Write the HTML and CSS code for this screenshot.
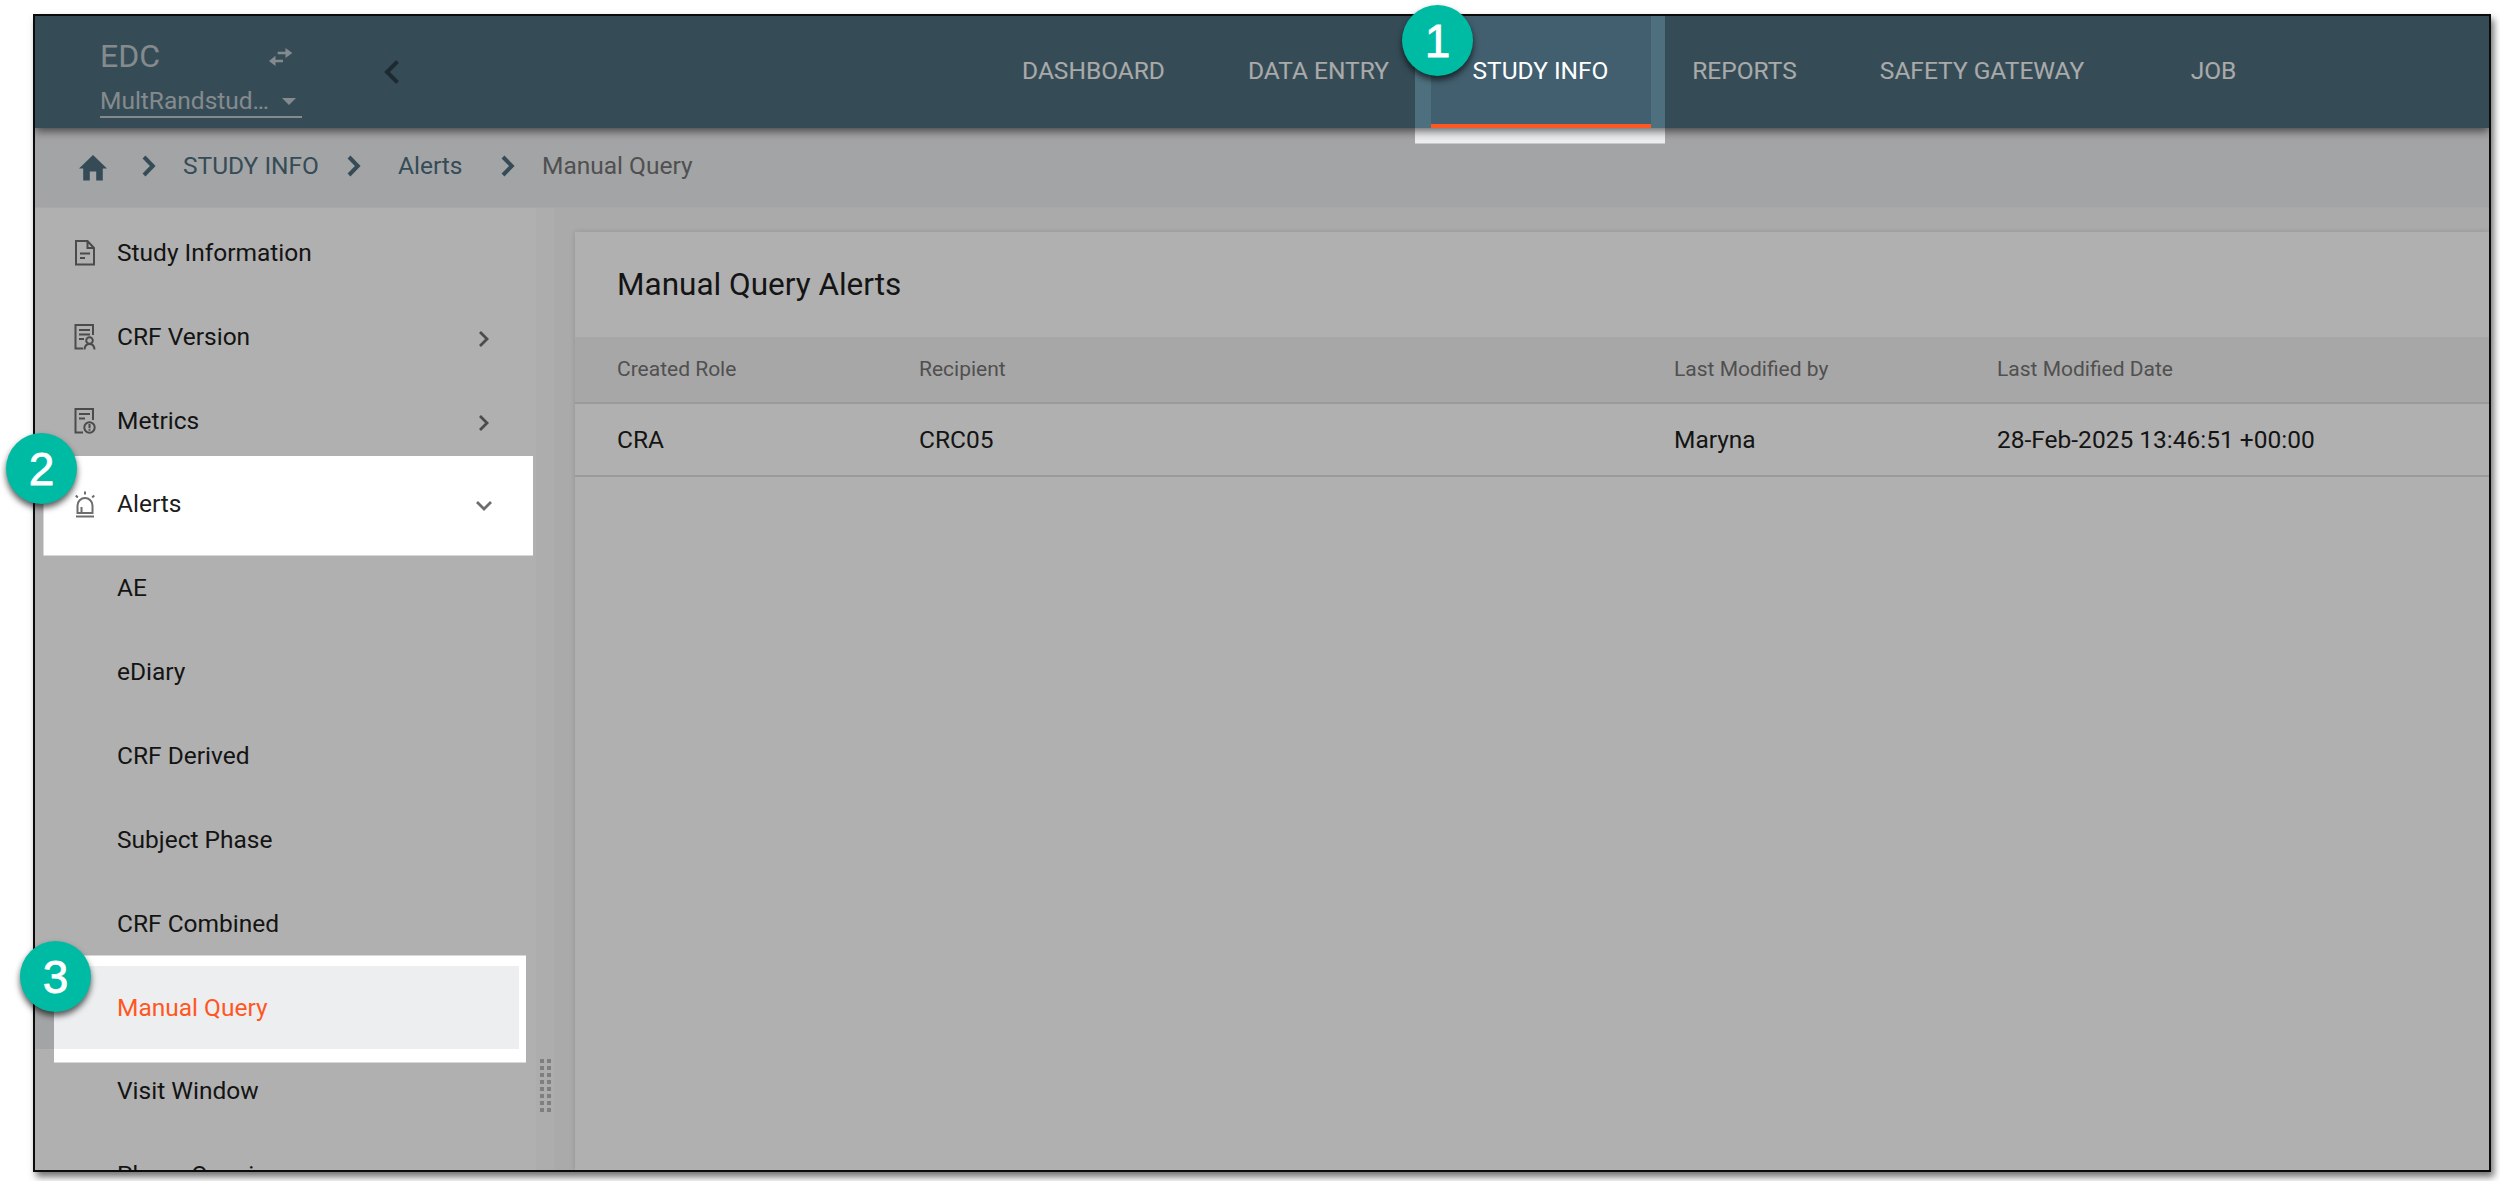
FILE: index.html
```html
<!DOCTYPE html>
<html lang="en">
<head>
<meta charset="utf-8">
<title>EDC - Manual Query Alerts</title>
<link rel="stylesheet" href="styles.css">
</head>
<body>
<div class="window">
  <header class="topbar">
    <div class="study">
      <div class="study-head"><span class="product">EDC</span>
        <svg class="swap" width="24" height="18" viewBox="0 0 24 18"><path d="M16.500 0v3.800H8.700v2.500h7.800V10L23.300 5zM6.500 7.800 0 12.900l6.500 5.100v-3.800H14v-2.500H6.500z"/></svg>
      </div>
      <div class="study-select"><span class="study-name">MultRandstud…</span><i class="caret"></i></div>
    </div>
    <svg class="collapse" width="16" height="26" viewBox="0 0 16 26"><path d="M13.500 2.500 3 13l10.500 10.500"/></svg>
    <nav class="tabs">
      <a class="tab t-dashboard">DASHBOARD</a>
      <a class="tab t-entry">DATA ENTRY</a>
      <a class="tab t-info active">STUDY INFO</a>
      <a class="tab t-reports">REPORTS</a>
      <a class="tab t-safety">SAFETY GATEWAY</a>
      <a class="tab t-job">JOB</a>
    </nav>
  </header>
  <div class="crumbs">
    <svg class="home" width="28" height="26" viewBox="0 0 28 26"><path d="M14 0 0 13.500h4.200V25.500h6.600V16.500h6.400v9h6.600V13.500H28z"/></svg>
    <svg class="sep s1" width="14" height="22" viewBox="0 0 14 22"><path d="m2 2 8.800 9L2 20"/></svg>
    <a class="crumb c1">STUDY INFO</a>
    <svg class="sep s2" width="14" height="22" viewBox="0 0 14 22"><path d="m2 2 8.800 9L2 20"/></svg>
    <a class="crumb c2">Alerts</a>
    <svg class="sep s3" width="14" height="22" viewBox="0 0 14 22"><path d="m2 2 8.800 9L2 20"/></svg>
    <span class="crumb here">Manual Query</span>
  </div>
  <div class="body">
    <aside class="side">
      <div class="item"><svg class="icon" width="22" height="28" viewBox="0 0 22 28"><path d="M2 2h11.500L20 9v16.500H2zM13.500 2v7H20M6 14.500h10M6 19h5"/></svg><span>Study Information</span></div>
      <div class="item"><svg class="icon" width="22" height="28" viewBox="0 0 22 28"><path d="M9 25.500H1.500V2H19v10M5 7h11M5 11.500h11M5 16h5M10.500 26.500c.3-4 2-5.500 5-5.500s4.700 1.500 5 5.500"/><circle cx="15.500" cy="17.500" r="3.300"/></svg><span>CRF Version</span><svg class="arrow" width="12" height="18" viewBox="0 0 12 18"><path d="m2 2 7 7-7 7"/></svg></div>
      <div class="item"><svg class="icon" width="22" height="28" viewBox="0 0 22 28"><path d="M9 25.500H1.500V2H19v11M5 7h11M5 11.500h6M15.500 17v4.200M15.500 22.300v1.500"/><circle cx="15.500" cy="20.500" r="5.200"/></svg><span>Metrics</span><svg class="arrow" width="12" height="18" viewBox="0 0 12 18"><path d="m2 2 7 7-7 7"/></svg></div>
      <div class="item"><svg class="icon" width="22" height="28" viewBox="0 0 22 28"><path d="M3.500 22v-7.500a7.500 7.500 0 0 1 15 0V22zM2 25.500h18M11 .5v3M1.800 4.500l2 2M20.200 4.500l-2 2M7.500 21v-5"/></svg><span>Alerts</span><svg class="arrow down" width="18" height="12" viewBox="0 0 18 12"><path d="m2 2 7 7 7-7"/></svg></div>
      <div class="item sub">AE</div>
      <div class="item sub">eDiary</div>
      <div class="item sub">CRF Derived</div>
      <div class="item sub">Subject Phase</div>
      <div class="item sub">CRF Combined</div>
      <div class="item sub current">Manual Query</div>
      <div class="item sub">Visit Window</div>
      <div class="item sub">Phase Opening</div>
    </aside>
    <div class="resizer"><div class="grip"></div></div>
    <main class="content">
      <section class="card">
        <h1>Manual Query Alerts</h1>
        <div class="row head"><div>Created Role</div><div>Recipient</div><div>Last Modified by</div><div>Last Modified Date</div></div>
        <div class="row"><div>CRA</div><div>CRC05</div><div>Maryna</div><div>28-Feb-2025 13:46:51 +00:00</div></div>
      </section>
    </main>
  </div>
</div>
<svg class="dim" width="2500" height="1181" viewBox="0 0 2500 1181"><path fill-rule="evenodd" d="M35 16H2489V1170H35zM1415 16H1665V143.500H1415zM43.500 456H533V555.500H43.500zM54 955.500H526V1062.500H54z"/></svg>
<div class="badge b1">1</div>
<div class="badge b2">2</div>
<div class="badge b3">3</div>
</body>
</html>
```
FILE: styles.css
```css
* { box-sizing: border-box; }
body { margin: 0; width: 2500px; height: 1181px; overflow: hidden; background: #fff; font-family: Roboto, sans-serif; font-size: 24.5px; padding: 14px 0 0 33px; position: relative; }
.window { width: 2458px; height: 1158px; border: 2px solid #0b0b0b; box-shadow: 3px 5px 7px rgba(0,0,0,.55); display: flex; flex-direction: column; overflow: hidden; background: #fff; }
.topbar { height: 112px; flex: none; display: flex; background: #4e6f7e; box-shadow: 0 3px 9px rgba(0,0,0,.6); position: relative; z-index: 2; }
.study { width: 202px; margin-left: 65px; color: #c0c9cd; }
.study-head { display: flex; justify-content: space-between; height: 62px; padding: 22px 9px 0 0; }
.product { font-size: 32px; line-height: 37px; }
.swap { margin-top: 10px; fill: #c0c9cd; }
.study-select { height: 40px; border-bottom: 2px solid #c0c9cd; display: flex; justify-content: space-between; padding: 8px 6px 0 0; }
.study-name { line-height: 30px; height: 30px; }
.caret { width: 0; height: 0; margin-top: 12px; border: 7px solid transparent; border-top-color: #c0c9cd; border-bottom: 0; }
.collapse { margin: 43px 0 0 82px; fill: none; stroke: #2c3e47; stroke-width: 4; }
.tabs { margin-left: 581px; display: flex; }
.tab { display: flex; align-items: center; justify-content: center; color: #f6f6f6; padding-bottom: 3px; white-space: nowrap; }
.t-dashboard { width: 225px; }
.t-entry { width: 225px; }
.t-info { width: 220px; }
.t-reports { width: 187px; }
.t-safety { width: 288px; }
.t-job { width: 175px; }
.tab.active { background: #425f6f; border-bottom: 4px solid #ff5722; color: #fff; padding: 1px 1px 0 0; }
.crumbs { height: 80px; flex: none; background: #edeef0; display: flex; align-items: center; padding: 0 0 3px 44px; color: #4e6f7e; border-bottom: 1px solid #f3f3f3; }
.crumb { padding-bottom: 2px; }
.home { fill: #4e6f7e; margin-top: 3px; }
.sep { fill: none; stroke: #4e6f7e; stroke-width: 4; }
.s1 { margin-left: 35px; margin-right: 27px; }
.s2 { margin-right: 37px; }
.s3 { margin-right: 27px; }
.c1 { width: 164px; }
.c2 { width: 103px; }
.here { color: #747474; }
.body { flex: 1; display: flex; min-height: 0; }
.side { width: 501px; flex: none; padding: 3px 17px 0 0; color: #1d1d1d; overflow: hidden; }
.item { height: 83.850px; display: flex; align-items: center; padding: 0 29px 1px 39px; }
.icon { width: 22px; margin-right: 21px; margin-top: 2px; fill: none; stroke: #6d6d6d; stroke-width: 2; }
.arrow { margin-left: auto; margin-top: 5px; fill: none; stroke: #6d6d6d; stroke-width: 2.800; }
.arrow.down { margin-right: -3px; }
.item.sub { padding-left: 82px; }
.item.current { background: #edeef0; color: #ff5722; }
.resizer { width: 18px; flex: none; background: #f9fbfa; padding: 851px 0 0 4px; }
.grip { width: 11px; height: 53px; background: repeating-linear-gradient(to bottom, transparent 0 4px, #f9fbfa 4px 7px), linear-gradient(to right, #b7b9b8 4px, transparent 4px 7px, #b7b9b8 7px); }
.content { flex: 1; background: #f7f7f7; padding: 24px 0 0 21px; min-width: 0; }
.card { height: 100%; background: #fff; box-shadow: 0 0 6px rgba(0,0,0,.14); }
h1 { margin: 0; height: 105px; padding: 33px 0 0 42px; font-size: 31.500px; line-height: 40px; font-weight: 400; color: #1d1d1d; }
.row { display: grid; grid-template-columns: 302px 755px 323px 1fr; height: 73px; align-items: center; padding-left: 42px; border-bottom: 2px solid #e0e0e0; color: #1d1d1d; }
.row.head { height: 67px; padding-bottom: 1px; background: #f2f2f2; font-size: 21px; color: #757575; }
.dim { position: absolute; left: 0; top: 0; fill: rgba(0,0,0,.31); z-index: 3; }
.badge { position: absolute; z-index: 4; width: 71px; height: 71px; border-radius: 50%; background: #00bba3; color: #fff; font: 46px/72px "Liberation Sans", sans-serif; text-align: center; -webkit-text-stroke: .8px #fff; box-shadow: 0 4px 6px rgba(0,0,0,.65); }
.b1 { left: 1402px; top: 5px; }
.b2 { left: 6px; top: 433px; }
.b3 { left: 20px; top: 941px; }
```
